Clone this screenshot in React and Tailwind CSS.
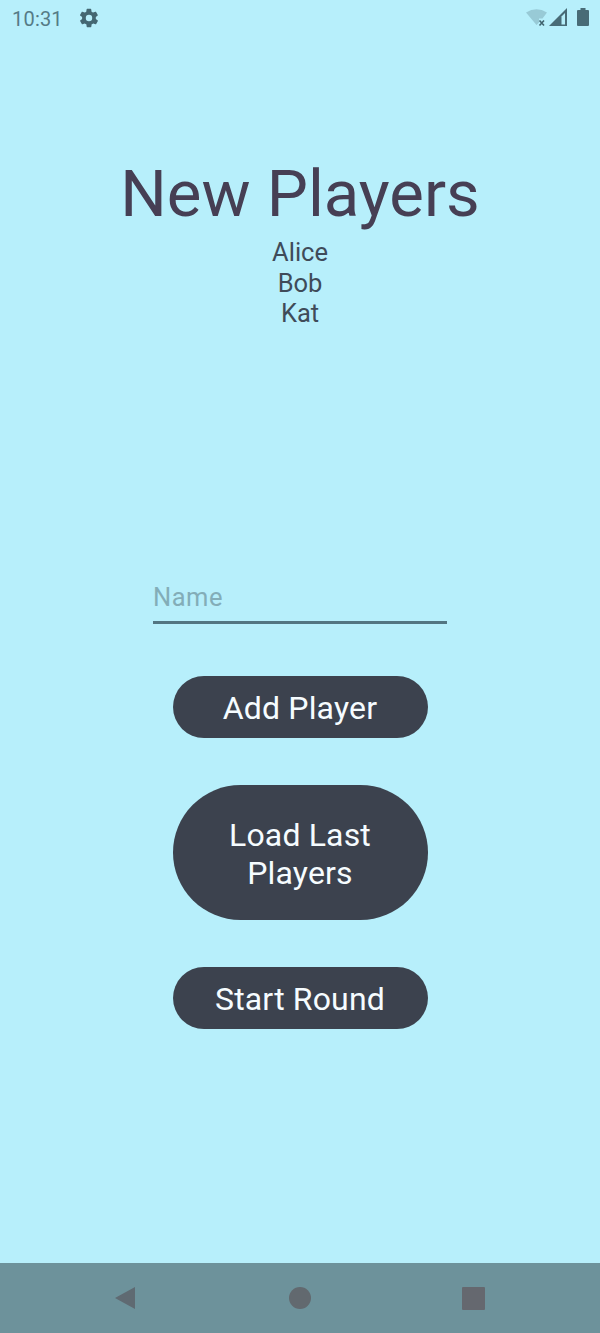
import { useState } from "react";

const players = ["Alice", "Bob", "Kat"];

function StatusBar() {
  return (
    <header className="flex h-9 shrink-0 items-center pl-3 pr-[11px] text-[#557b86]">
      <span className="pt-px text-[20px] leading-9 tracking-[0.2px]">10:31</span>
      <svg className="ml-[15px] size-[22px]" viewBox="0 0 24 24" fill="#446772">
        <path
          fillRule="evenodd"
          d="M19.4 13a7.5 7.5 0 0 0 0-2l2.1-1.6a.5.5 0 0 0 .1-.6l-2-3.5a.5.5 0 0 0-.6-.2l-2.5 1a7.3 7.3 0 0 0-1.7-1l-.4-2.6a.5.5 0 0 0-.5-.5h-4a.5.5 0 0 0-.5.5L9 5.100a7.300 7.300 0 0 0-1.700 1l-2.500-1a.5.5 0 0 0-.6.2l-2 3.500a.5.5 0 0 0 .1.6L4.500 11a7.500 7.500 0 0 0 0 2l-2.100 1.600a.5.5 0 0 0-.1.6l2 3.500a.5.5 0 0 0 .6.2l2.500-1a7.300 7.300 0 0 0 1.700 1l.4 2.600a.5.5 0 0 0 .5.5h4a.5.5 0 0 0 .5-.5l.4-2.600a7.300 7.300 0 0 0 1.700-1l2.500 1a.5.5 0 0 0 .6-.2l2-3.500a.5.5 0 0 0-.1-.6zM12 15.500a3.500 3.500 0 1 1 0-7 3.500 3.500 0 0 1 0 7z"
        />
      </svg>
      <svg className="ml-auto h-5 w-[21px]" viewBox="0 0 21 20">
        <path d="M0 4.500Q10.500-2 21 4.500L16.500 10.500H13v4l-2.500 2.500z" fill="#98cad6" />
        <path d="m13.500 12.500 4.500 5m0-5-4.500 5" stroke="#3f626d" strokeWidth="1.600" />
      </svg>
      <svg className="ml-[2px] h-5 w-[18px]" viewBox="0 0 18 20">
        <path d="M0 18 18 0v18z" fill="#486b76" />
        <path d="M12.500 8.500 16 5v11.500h-3.500z" fill="#b5eef9" />
      </svg>
      <svg className="ml-[10px] h-5 w-3" viewBox="0 0 12 20">
        <path d="M3.500 0h5v2H11q1 0 1 1v14q0 1-1 1H1q-1 0-1-1V3q0-1 1-1h2.500z" fill="#486b76" />
      </svg>
    </header>
  );
}

function PillButton({ className, children }) {
  return (
    <button
      type="button"
      className={`flex w-[255px] items-center justify-center bg-[#3c424e] text-center text-[32px] leading-[38px] tracking-[0.15px] text-[#f6fcff] ${className}`}
    >
      {children}
    </button>
  );
}

function NavigationBar() {
  return (
    <nav className="flex h-[70px] shrink-0 items-center bg-[#6d929b] pl-[115px] pr-[115px]">
      <svg className="h-[22px] w-5" viewBox="0 0 20 22">
        <path d="M0 11 20 0v22z" fill="#5f6a72" />
      </svg>
      <svg className="ml-[154px] size-[22px]" viewBox="0 0 22 22">
        <circle cx="11" cy="11" r="11" fill="#62696f" />
      </svg>
      <svg className="ml-[151px] size-[23px]" viewBox="0 0 23 23">
        <rect width="23" height="23" rx="1" fill="#65686f" />
      </svg>
    </nav>
  );
}

export default function App() {
  const [name, setName] = useState("");

  return (
    <div className="flex h-[1333px] w-[600px] flex-col bg-[#b7effb] font-[Roboto,sans-serif]">
      <StatusBar />
      <main className="flex flex-1 flex-col items-center pt-[119px]">
        <h1 className="text-[65.300px] leading-[77px] text-[#463f54]">New Players</h1>
        <ul className="mt-[5px] h-[335px] text-center text-[25.500px] leading-[30.500px] text-[#3f4b59]">
          {players.map((player) => (
            <li key={player}>{player}</li>
          ))}
        </ul>
        <input
          aria-label="Name"
          placeholder="Name"
          value={name}
          onChange={(event) => setName(event.target.value)}
          className="h-[52px] w-[294px] border-b-[3px] border-[#527581] bg-transparent pt-px text-[25.500px] tracking-[0.5px] outline-none placeholder:text-[#83adb8]"
        />
        <PillButton className="mt-[52px] h-[62px] rounded-[31px] pt-px">Add Player</PillButton>
        <PillButton className="mt-[47px] h-[135px] rounded-[67.500px] px-10 pt-[2px]">
          Load Last
          <br />
          Players
        </PillButton>
        <PillButton className="mt-[47px] h-[62px] rounded-[31px] pt-[2px]">Start Round</PillButton>
      </main>
      <NavigationBar />
    </div>
  );
}
